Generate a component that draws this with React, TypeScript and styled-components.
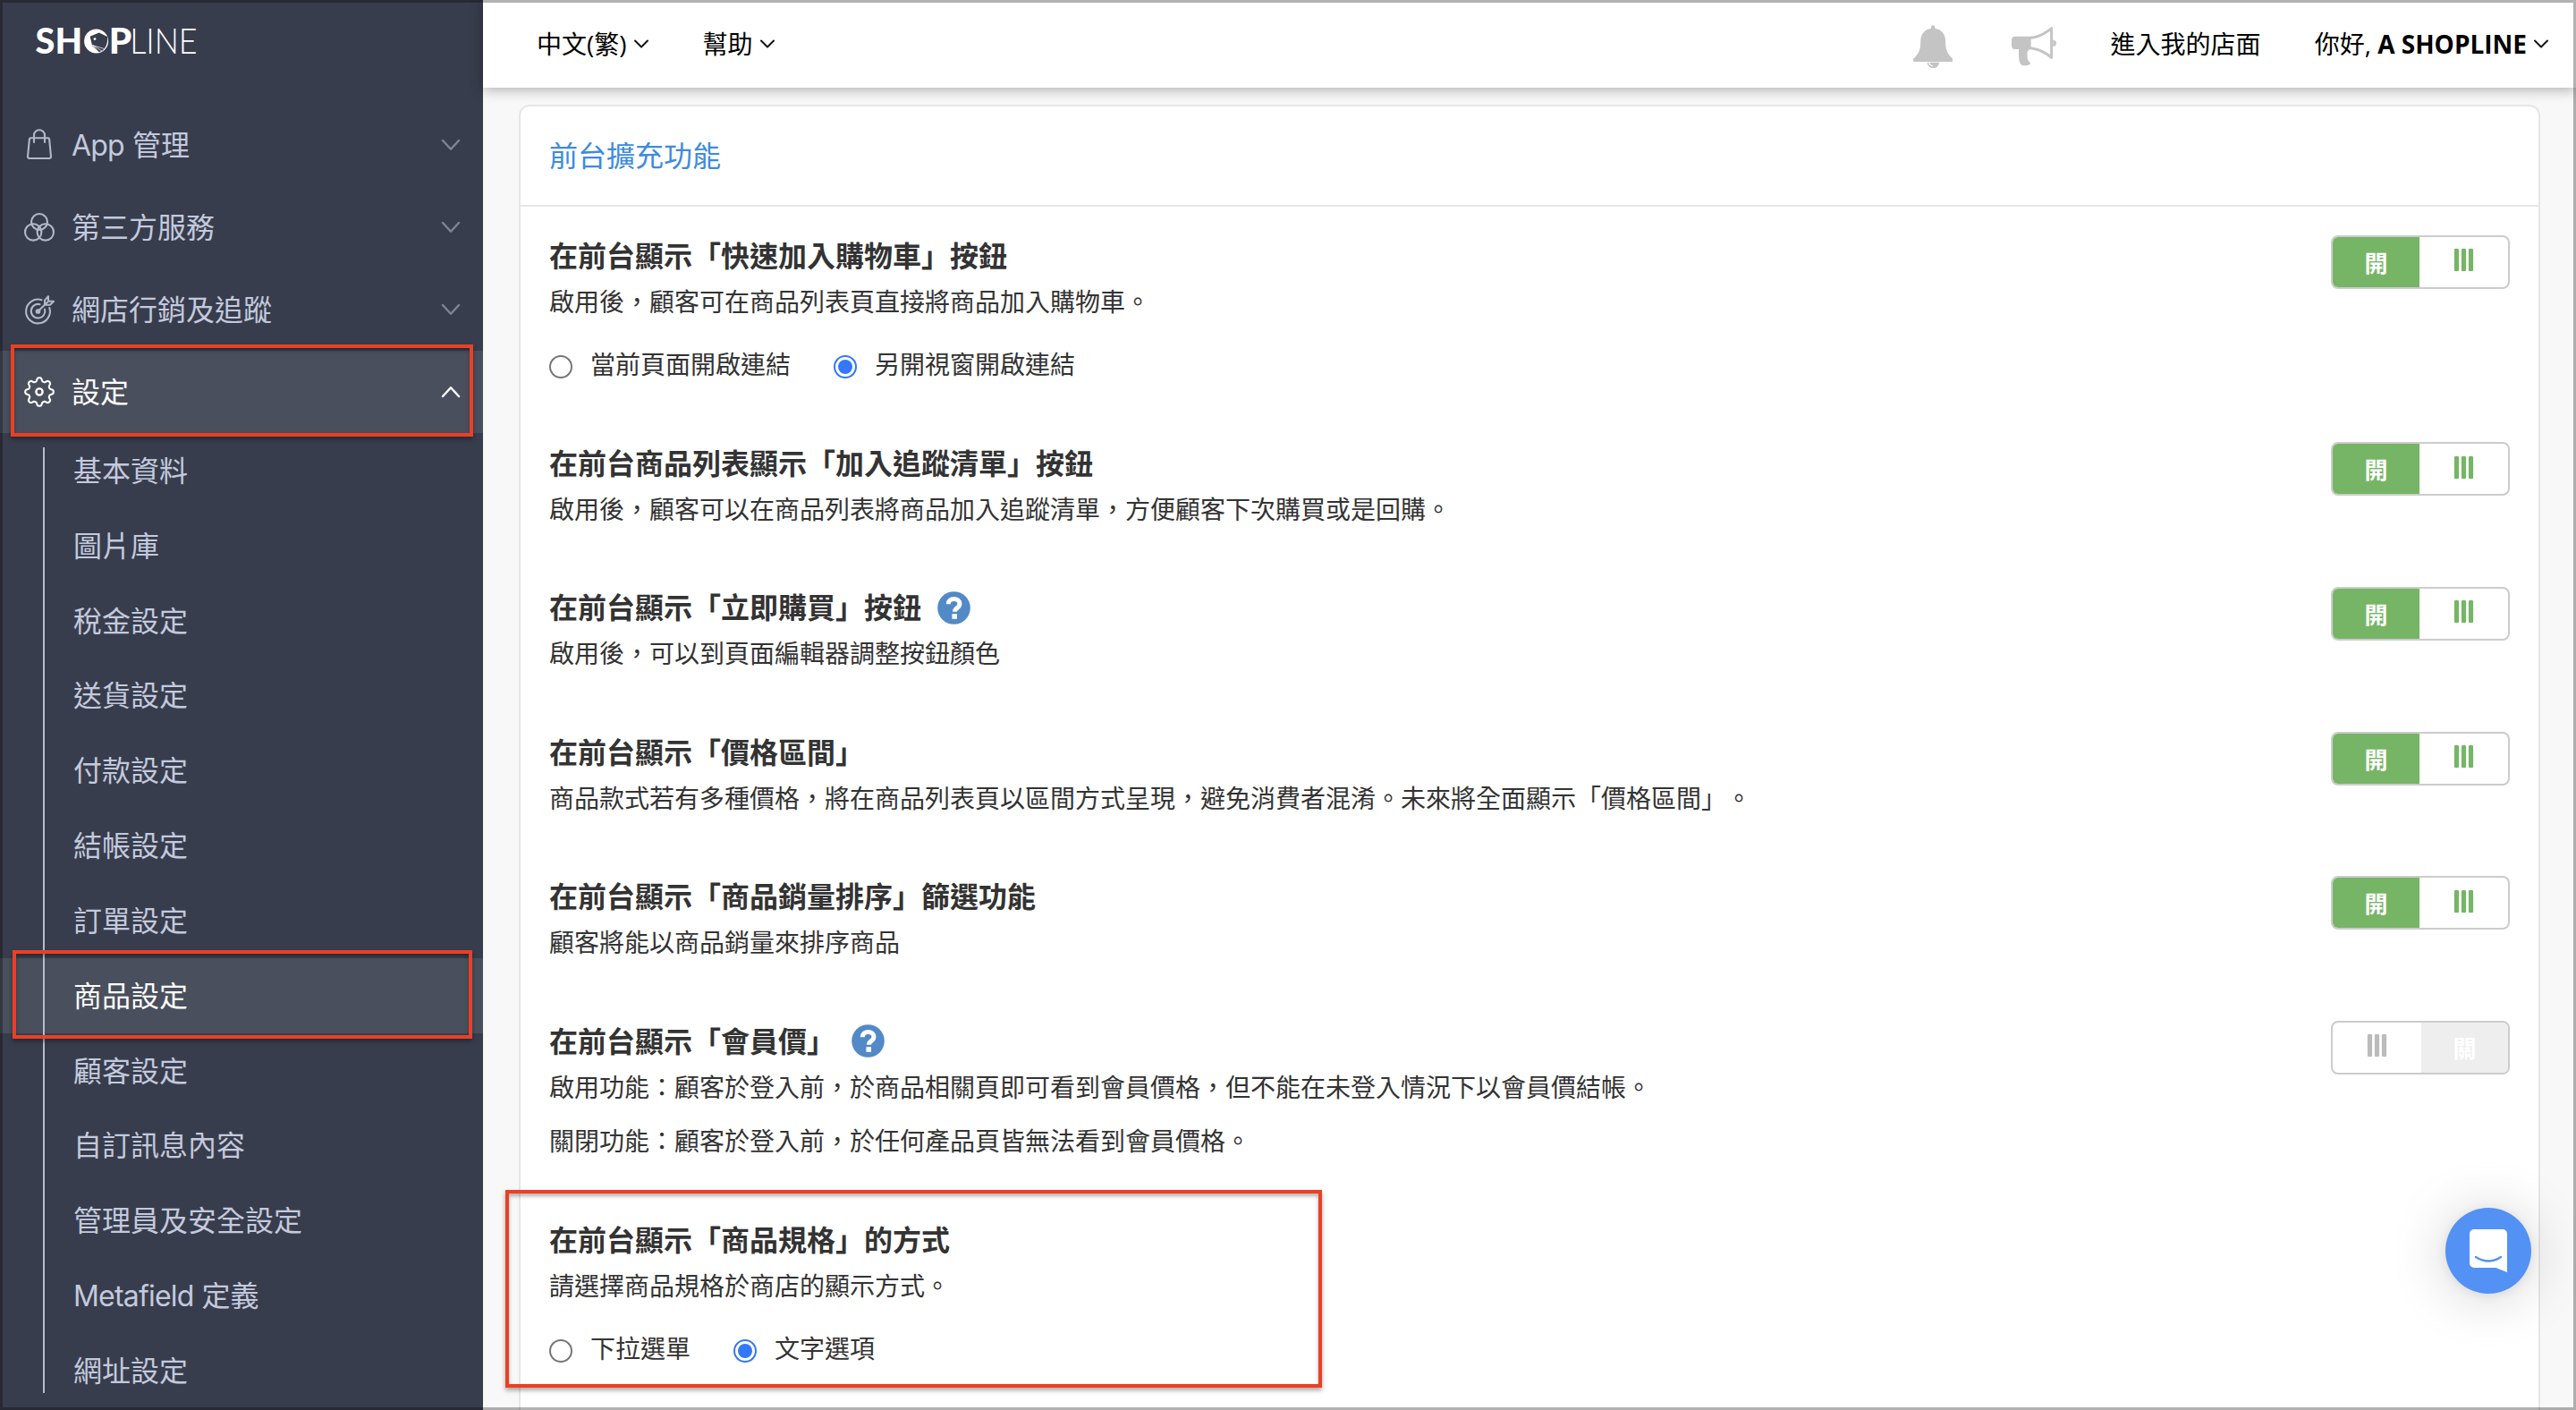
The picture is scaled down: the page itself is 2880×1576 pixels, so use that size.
import React from "react";
import styled, { createGlobalStyle, css } from "styled-components";

const GlobalStyle = createGlobalStyle`
  *, *::before, *::after { box-sizing: border-box; }
  html, body { margin: 0; padding: 0; }
  body {
    width: 2880px;
    height: 1576px;
    overflow: hidden;
    background: #f8f8f8;
    font-family: "Open Sans", "Noto Sans CJK TC", sans-serif;
    color: #333;
    text-spacing-trim: space-all;
  }
  h2, h3, p, ul { margin: 0; padding: 0; }
`;

const Page = styled.div`
  position: relative;
  display: flex;
  width: 2880px;
  height: 1576px;
  overflow: hidden;
`;

/* ---------- sidebar ---------- */

const Sidebar = styled.aside`
  flex: none;
  width: 540px;
  height: 1576px;
  background: #383d4d;
  color: #c3cadd;
  font-family: Inter, "Noto Sans CJK TC", sans-serif;
  font-size: 32px;
`;

const Brand = styled.div`
  display: flex;
  height: 116px;
  padding: 12px 0 0 38px;
`;

const NavRow = styled.div<{ $active?: boolean }>`
  display: flex;
  align-items: center;
  height: 92px;
  padding: 0 26px;
  color: ${(p) => (p.$active ? "#fff" : "#c3cadd")};
  background: ${(p) => (p.$active ? "#4a4f5d" : "transparent")};
`;

const NavIcon = styled.svg<{ $active?: boolean }>`
  flex: none;
  width: 36px;
  height: 36px;
  margin-right: 18px;
  overflow: visible;
  fill: none;
  stroke: ${(p) => (p.$active ? "#fff" : "#b3b8c6")};
  stroke-width: 2.1;
  stroke-linecap: round;
  stroke-linejoin: round;
`;

const NavLabel = styled.span`
  flex: 1;
  padding-top: 2px;
  line-height: 90px;
`;

const Latin = styled.span`
  letter-spacing: -0.8px;
`;

const Chevron = styled.svg<{ $color: string; $w: number; $h: number; $stroke: number }>`
  flex: none;
  width: ${(p) => p.$w}px;
  height: ${(p) => p.$h}px;
  overflow: visible;
  fill: none;
  stroke: ${(p) => p.$color};
  stroke-width: ${(p) => p.$stroke};
  stroke-linecap: round;
  stroke-linejoin: round;
`;

const SubNav = styled.ul`
  position: relative;
  list-style: none;
  &::before {
    content: "";
    position: absolute;
    left: 48px;
    top: 16px;
    width: 2px;
    height: 1057px;
    background: #b6bccb;
  }
`;

const SubItem = styled.li<{ $active?: boolean }>`
  height: 83.84px;
  padding: 1px 0 0 82px;
  line-height: 84px;
  ${(p) =>
    p.$active &&
    css`
      color: #fff;
      background: #4a4f5d;
    `}
`;

/* ---------- header ---------- */

const Main = styled.main`
  flex: 1;
  display: flex;
  flex-direction: column;
  min-width: 0;
`;

const Header = styled.header`
  position: relative;
  z-index: 2;
  flex: none;
  display: flex;
  align-items: center;
  height: 98px;
  padding: 0 31px 0 60px;
  background: #fff;
  color: #000;
  font-size: 28px;
  line-height: 98px;
  box-shadow: 0 2px 14px rgba(0, 0, 0, 0.32);
`;

const MenuLink = styled.span`
  display: flex;
  align-items: center;
  gap: 8px;
  margin-right: 60px;
  white-space: pre;
  &:first-child {
    margin-right: 61px;
  }
  &:last-child {
    margin-right: 0;
  }
`;

const Spacer = styled.div`
  flex: 1;
`;

const BellIcon = styled.svg`
  width: 44.3px;
  height: 48.3px;
  margin: 6px 66px 0 0;
`;

const MegaphoneIcon = styled.svg`
  width: 50.3px;
  height: 43.3px;
  margin: 6px 60px 0 0;
`;

/* ---------- content ---------- */

const Card = styled.section`
  flex: 1;
  margin: 19px 40px 0 40px;
  border: 2px solid #e6e6e6;
  border-bottom: 0;
  border-radius: 12px 12px 0 0;
  background: #fff;
`;

const CardTitle = styled.h2`
  height: 112px;
  padding: 0 32px;
  border-bottom: 2px solid #e6e6e6;
  font-size: 32px;
  font-weight: 400;
  line-height: 110px;
  color: #3d8bdc;
`;

const CardBody = styled.div`
  padding: 31px 32px 0;
`;

const Setting = styled.div`
  display: flex;
  justify-content: space-between;
  align-items: flex-start;
  padding-bottom: 66.6px;
`;

const SettingTitle = styled.h3`
  display: flex;
  align-items: center;
  height: 48px;
  margin-bottom: 7px;
  font-size: 32px;
  font-weight: 700;
  line-height: 48px;
`;

const SettingText = styled.p`
  height: 40px;
  font-size: 28px;
  line-height: 40px;
  white-space: nowrap;
  & + & {
    margin-top: 20px;
  }
`;

const HelpIcon = styled.svg`
  width: 37px;
  height: 37px;
  margin-left: 18px;
`;

const RadioRow = styled.div`
  display: flex;
  height: 40px;
  margin-top: 30px;
`;

const RadioOption = styled.label`
  display: flex;
  align-items: center;
  margin-right: 48px;
  font-size: 28px;
  line-height: 40px;
`;

const RadioMark = styled.span<{ $checked: boolean }>`
  display: grid;
  place-items: center;
  width: 26px;
  height: 26px;
  margin: 6px 20px 0 0;
  border: 2px solid ${(p) => (p.$checked ? "#3478f6" : "#767676")};
  border-radius: 50%;
  background: #fff;
  &::after {
    content: "";
    width: 16px;
    height: 16px;
    border-radius: 50%;
    background: ${(p) => (p.$checked ? "#3478f6" : "transparent")};
  }
`;

const Toggle = styled.div<{ $on: boolean }>`
  flex: none;
  display: flex;
  flex-direction: ${(p) => (p.$on ? "row" : "row-reverse")};
  width: 200px;
  height: 60px;
  margin-top: 0.8px;
  border: 2px solid #ccc;
  border-radius: 8px;
  overflow: hidden;
  background: #fff;
`;

const ToggleLabel = styled.span<{ $on: boolean }>`
  width: 97px;
  padding-top: 1px;
  text-align: center;
  font-size: 26px;
  font-weight: 700;
  line-height: 56px;
  color: #fff;
  background: ${(p) => (p.$on ? "#76b565" : "#eee")};
`;

const ToggleHandle = styled.span<{ $on: boolean }>`
  flex: 1;
  display: flex;
  justify-content: center;
  gap: 3px;
  padding-top: 13.5px;
  & > i {
    width: 5px;
    height: 25px;
    border-radius: 1.5px;
    background: ${(p) => (p.$on ? "#76b565" : "#bbb")};
    box-shadow: 0 0 1px ${(p) => (p.$on ? "#76b565" : "#bbb")};
  }
`;

/* ---------- overlays ---------- */

const Highlight = styled.div<{ $x: number; $y: number; $w: number; $h: number }>`
  position: absolute;
  z-index: 4;
  left: ${(p) => p.$x}px;
  top: ${(p) => p.$y}px;
  width: ${(p) => p.$w}px;
  height: ${(p) => p.$h}px;
  border: 4px solid #ea4025;
  box-shadow: 0 3px 5px rgba(0, 0, 0, 0.35), inset 0 3px 4px rgba(0, 0, 0, 0.3);
`;

const ChatButton = styled.button`
  position: absolute;
  z-index: 4;
  left: 2734px;
  top: 1350px;
  display: grid;
  place-items: center;
  width: 96px;
  height: 96px;
  padding: 0;
  border: 0;
  border-radius: 50%;
  background: #5391f5;
  box-shadow: 0 2px 12px rgba(0, 0, 0, 0.08), 0 4px 64px rgba(0, 0, 0, 0.18);
`;

const Frame = styled.div`
  position: absolute;
  z-index: 5;
  inset: 0;
  border: 3px solid rgba(0, 0, 0, 0.3);
  pointer-events: none;
`;

/* ---------- icons ---------- */

const gearPath = (() => {
  const steps = 160;
  const parts: string[] = [];
  for (let i = 0; i < steps; i++) {
    const a = (i / steps) * Math.PI * 2;
    const r = 13.9 + 2 * Math.tanh(1.7 * Math.cos(8 * a));
    parts.push(`${i ? "L" : "M"}${(18 + r * Math.sin(a)).toFixed(2)} ${(18 - r * Math.cos(a)).toFixed(2)}`);
  }
  return parts.join("") + "z";
})();

const BagGlyph = () => (
  <NavIcon viewBox="0 0 36 36">
    <path d="M8.2 10.2h19.6a1.3 1.3 0 0 1 1.3 1.2L31 31a1.8 1.8 0 0 1-1.8 2H6.8A1.8 1.8 0 0 1 5 31l1.9-19.6a1.3 1.3 0 0 1 1.3-1.2z" />
    <path d="M12 15V7.2a6 6 0 0 1 12 0V15" />
  </NavIcon>
);

const CirclesGlyph = () => (
  <NavIcon viewBox="0 0 36 36">
    <circle cx="18" cy="12" r="9" />
    <circle cx="11.2" cy="23.4" r="9.2" />
    <circle cx="24.8" cy="23.4" r="9.2" />
  </NavIcon>
);

const TargetGlyph = () => (
  <NavIcon viewBox="0 0 36 36">
    <path d="M20.5 7.2A13.4 13.4 0 1 0 29.3 16" />
    <path d="M18.5 12.2a7.8 7.8 0 1 0 5.6 5.6" />
    <circle cx="16.5" cy="20" r="1.8" />
    <path d="M16.5 20 28 8.8M24 12.8V7.6l4-4.4v5.6h6l-4 4z" />
  </NavIcon>
);

const GearGlyph = () => (
  <NavIcon viewBox="0 0 36 36" $active>
    <path d={gearPath} />
    <circle cx="18" cy="18" r="3.6" strokeWidth="2.4" />
  </NavIcon>
);

const LogoSvg = styled.svg`
  flex: none;
  width: 184px;
  height: 64px;
  overflow: visible;
  fill: #fff;
  font-family: Lato, sans-serif;
  font-size: 39px;
`;

const Logo = () => (
  <LogoSvg viewBox="38 12 184 64">
    <text x="39.6" y="60" fontWeight="900" textLength="52.5" lengthAdjust="spacingAndGlyphs">
      SH
    </text>
    <circle cx="107.6" cy="46" r="13.5" />
    <path d="M100.6 40.8 110.8 36.6 120 41c.8 6-1 11.500-5.500 15.500l-4 1.800-7.400-7.200z" fill="#383d4d" />
    <circle cx="106" cy="43.600" r="1.400" />
    <path d="M103.500 50.500 114 57M103.500 50.500l7 8M103.500 50.500l13 4" stroke="#fff" strokeWidth=".7" />
    <text x="121.800" y="60" fontWeight="900" textLength="25.500" lengthAdjust="spacingAndGlyphs">
      P
    </text>
    <text x="145.200" y="60" fontWeight="300" textLength="75.500" lengthAdjust="spacingAndGlyphs">
      LINE
    </text>
  </LogoSvg>
);

const SidebarChevron = ({ up }: { up?: boolean }) => (
  <Chevron viewBox="0 0 20 12" $w={20} $h={12} $color={up ? "#fff" : "#7d8496"} $stroke={2.4}>
    <path d={up ? "M1 11 10 1.2 19 11" : "M1 1 10 10.8 19 1"} />
  </Chevron>
);

const HeaderChevron = () => (
  <Chevron viewBox="0 0 16 9" $w={16} $h={9} $color="#111" $stroke={2}>
    <path d="M1 .5 8 7.5 15 .5" />
  </Chevron>
);

const Help = () => (
  <HelpIcon viewBox="0 0 37 37">
    <circle cx="18.5" cy="18.5" r="18.3" fill="#5289c7" />
    <path
      d="M12.3 14.2C12.3 10.4 15 8.6 18.6 8.6s6.3 2 6.3 5.3c0 4.6-5.5 4.6-5.5 8.9"
      fill="none"
      stroke="#fff"
      strokeWidth="5"
    />
    <rect x="16.400" y="25.200" width="5.600" height="5.600" fill="#fff" />
  </HelpIcon>
);

/* ---------- data ---------- */

const subItems: { latin?: string; label: string; active?: boolean }[] = [
  { label: "基本資料" },
  { label: "圖片庫" },
  { label: "稅金設定" },
  { label: "送貨設定" },
  { label: "付款設定" },
  { label: "結帳設定" },
  { label: "訂單設定" },
  { label: "商品設定", active: true },
  { label: "顧客設定" },
  { label: "自訂訊息內容" },
  { label: "管理員及安全設定" },
  { latin: "Metafield", label: " 定義" },
  { label: "網址設定" },
];

type SettingData = {
  title: string;
  texts: string[];
  help?: boolean;
  toggle?: "on" | "off";
  options?: { label: string; checked: boolean }[];
};

const settings: SettingData[] = [
  {
    title: "在前台顯示「快速加入購物車」按鈕",
    texts: ["啟用後，顧客可在商品列表頁直接將商品加入購物車。"],
    toggle: "on",
    options: [
      { label: "當前頁面開啟連結", checked: false },
      { label: "另開視窗開啟連結", checked: true },
    ],
  },
  {
    title: "在前台商品列表顯示「加入追蹤清單」按鈕",
    texts: ["啟用後，顧客可以在商品列表將商品加入追蹤清單，方便顧客下次購買或是回購。"],
    toggle: "on",
  },
  {
    title: "在前台顯示「立即購買」按鈕",
    texts: ["啟用後，可以到頁面編輯器調整按鈕顏色"],
    help: true,
    toggle: "on",
  },
  {
    title: "在前台顯示「價格區間」",
    texts: ["商品款式若有多種價格，將在商品列表頁以區間方式呈現，避免消費者混淆。未來將全面顯示「價格區間」。"],
    toggle: "on",
  },
  {
    title: "在前台顯示「商品銷量排序」篩選功能",
    texts: ["顧客將能以商品銷量來排序商品"],
    toggle: "on",
  },
  {
    title: "在前台顯示「會員價」",
    texts: [
      "啟用功能：顧客於登入前，於商品相關頁即可看到會員價格，但不能在未登入情況下以會員價結帳。",
      "關閉功能：顧客於登入前，於任何產品頁皆無法看到會員價格。",
    ],
    help: true,
    toggle: "off",
  },
  {
    title: "在前台顯示「商品規格」的方式",
    texts: ["請選擇商品規格於商店的顯示方式。"],
    options: [
      { label: "下拉選單", checked: false },
      { label: "文字選項", checked: true },
    ],
  },
];

const SettingItem = ({ data }: { data: SettingData }) => {
  const on = data.toggle === "on";
  return (
    <Setting>
      <div>
        <SettingTitle>
          {data.title}
          {data.help && <Help />}
        </SettingTitle>
        {data.texts.map((t) => (
          <SettingText key={t}>{t}</SettingText>
        ))}
        {data.options && (
          <RadioRow>
            {data.options.map((o) => (
              <RadioOption key={o.label}>
                <RadioMark $checked={o.checked} />
                {o.label}
              </RadioOption>
            ))}
          </RadioRow>
        )}
      </div>
      {data.toggle && (
        <Toggle $on={on}>
          <ToggleLabel $on={on}>{on ? "開" : "關"}</ToggleLabel>
          <ToggleHandle $on={on}>
            <i />
            <i />
            <i />
          </ToggleHandle>
        </Toggle>
      )}
    </Setting>
  );
};

export default function App() {
  return (
    <Page lang="zh-Hant">
      <GlobalStyle />
      <Sidebar>
        <Brand>
          <Logo />
        </Brand>
        <NavRow>
          <BagGlyph />
          <NavLabel>
            <Latin>App</Latin> 管理
          </NavLabel>
          <SidebarChevron />
        </NavRow>
        <NavRow>
          <CirclesGlyph />
          <NavLabel>第三方服務</NavLabel>
          <SidebarChevron />
        </NavRow>
        <NavRow>
          <TargetGlyph />
          <NavLabel>網店行銷及追蹤</NavLabel>
          <SidebarChevron />
        </NavRow>
        <NavRow $active>
          <GearGlyph />
          <NavLabel>設定</NavLabel>
          <SidebarChevron up />
        </NavRow>
        <SubNav>
          {subItems.map((item) => (
            <SubItem key={item.label} $active={item.active}>
              {item.latin && <Latin>{item.latin}</Latin>}
              {item.label}
            </SubItem>
          ))}
        </SubNav>
      </Sidebar>

      <Main>
        <Header>
          <MenuLink>
            中文(繁)
            <HeaderChevron />
          </MenuLink>
          <MenuLink>
            幫助
            <HeaderChevron />
          </MenuLink>
          <Spacer />
          <BellIcon viewBox="57 35 133 145" fill="#c4c4c4">
            <path d="M117 46v-4a6.5 6.5 0 0 1 13 0v4C150 50 164 64 165 84L166 105C168 125 178 137 187 146a6 6 0 0 1-4 12H64a6 6 0 0 1-4-12C69 137 79 125 81 105L82 84C83 64 97 50 117 46z" />
            <path d="M104 160a20 20 0 0 0 40 0z" />
            <path d="M110 161q2 10 13 12" fill="none" stroke="#fff" strokeWidth="3.5" />
          </BellIcon>
          <MegaphoneIcon viewBox="387 43 151 130" fill="#c4c4c4">
            <path d="M399 75h53v43h-53a12 12 0 0 1-12-12V87a12 12 0 0 1 12-12z" />
            <path
              d="M450 80c26-2 50-15 71-32v98c-21-17-45-30-71-32"
              fill="none"
              stroke="#c4c4c4"
              strokeWidth="9"
              strokeLinejoin="round"
            />
            <path d="M411 116h41c-12 6-14 14-12 22-2 10 2 20 11 27-6 9-26 11-34 3-7-13-6-28-6-52z" />
            <path d="M526 87a11 11 0 0 1 0 22z" />
          </MegaphoneIcon>
          <MenuLink>進入我的店面</MenuLink>
          <MenuLink>
            <span>
              你好, <b>A SHOPLINE</b>
            </span>
            <HeaderChevron />
          </MenuLink>
        </Header>
        <Card>
          <CardTitle>前台擴充功能</CardTitle>
          <CardBody>
            {settings.map((s) => (
              <SettingItem key={s.title} data={s} />
            ))}
          </CardBody>
        </Card>
      </Main>

      <Highlight $x={12} $y={385} $w={517} $h={103} />
      <Highlight $x={14} $y={1062} $w={514} $h={99} />
      <Highlight $x={565} $y={1330} $w={913} $h={221} />
      <ChatButton>
        <svg width="42" height="48" viewBox="0 0 42 48">
          <path d="M5 0h32a5 5 0 0 1 5 5v43l-12.5-5H5a5 5 0 0 1-5-5V5a5 5 0 0 1 5-5z" fill="#fff" />
          <path d="M7 31q14 9 28 0" fill="none" stroke="#5391f5" strokeWidth="2.4" strokeLinecap="round" />
        </svg>
      </ChatButton>
      <Frame />
    </Page>
  );
}
